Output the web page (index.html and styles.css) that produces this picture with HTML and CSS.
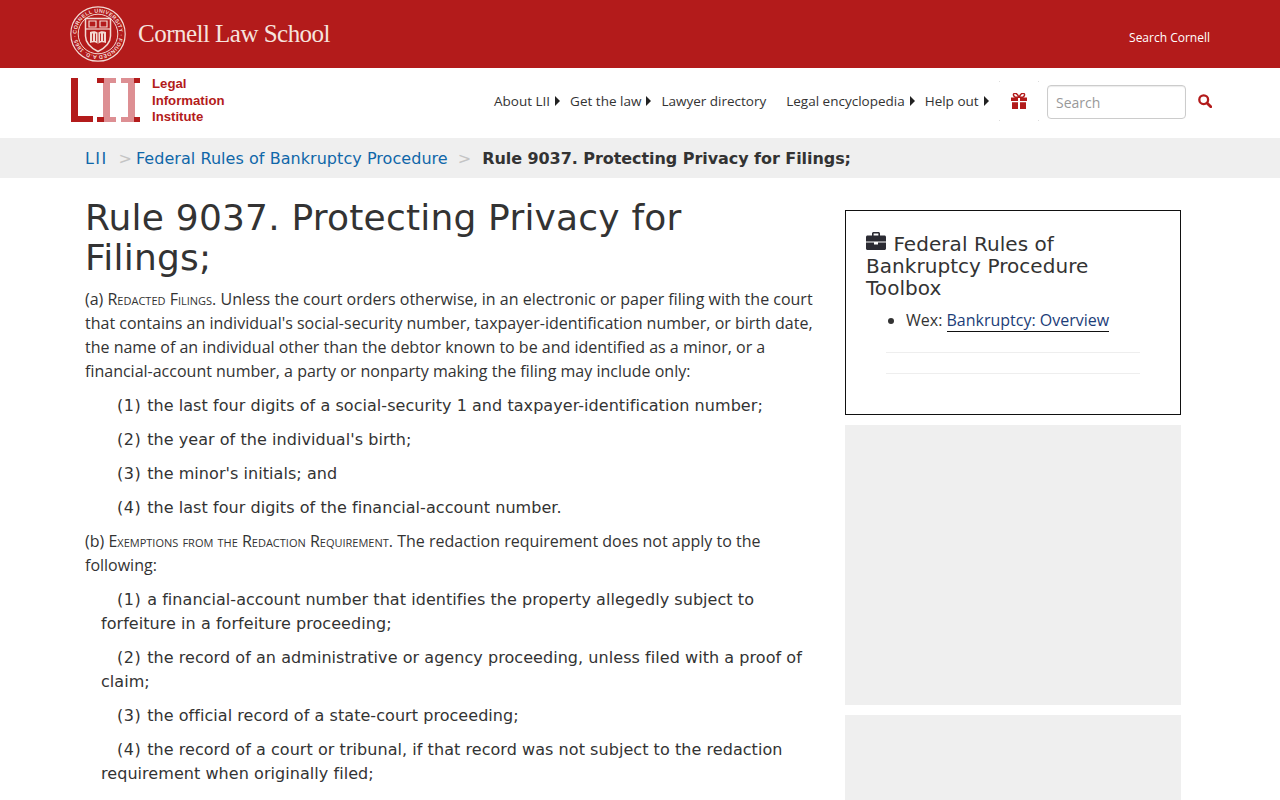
FILE: index.html
```html
<!DOCTYPE html>
<html lang="en">
<head>
<meta charset="utf-8">
<title>Rule 9037. Protecting Privacy for Filings</title>
<link rel="stylesheet" href="styles.css">
</head>
<body>
<header class="cornell">
  <a class="cornell-brand" href="#">
    <svg class="seal" viewBox="0 0 56 56" width="56" height="56" aria-hidden="true">
      <circle cx="28" cy="28" r="27.2" fill="none" stroke="#f3d9d3" stroke-width="1.2"/>
      <circle cx="28" cy="28" r="19.8" fill="none" stroke="#f3d9d3" stroke-width="1"/>
      <defs><path id="ring" d="M28 28 m-21.4 0 a21.4 21.4 0 1 1 42.8 0 a21.4 21.4 0 1 1 -42.8 0"/></defs>
      <text class="seal-text"><textPath href="#ring" textLength="132">CORNELL UNIVERSITY · FOUNDED A.D. 1865 ·</textPath></text>
      <path d="M15.5 12.5 H40.5 V30 C40.5 38 33 43 28 45.5 C23 43 15.5 38 15.5 30 Z" fill="none" stroke="#f3d9d3" stroke-width="1.5"/>
      <path d="M15.5 23 H40.5" stroke="#f3d9d3" stroke-width="1.2"/>
      <path d="M19 15 h7 v6 h-7 z M30 15 h7 v6 h-7 z" fill="none" stroke="#f3d9d3" stroke-width="1.2"/>
      <path d="M20 26 C23 25 26 25 28 27 C30 25 33 25 36 26 V37 C33 36 30 36 28 38 C26 36 23 36 20 37 Z" fill="#f3d9d3"/>
      <path d="M22.5 27.5 V35 M25.5 27.5 V35 M30.5 27.5 V35 M33.5 27.5 V35 M28 27 V38" stroke="#b31b1b" stroke-width=".9"/>
    </svg>
    <span class="cornell-name">Cornell Law School</span>
  </a>
  <a class="search-cornell" href="#">Search Cornell</a>
</header>

<nav class="lii-bar">
  <a class="lii-logo" href="#">
    <svg viewBox="0 0 70 44" width="70" height="44" aria-hidden="true">
      <path d="M0 0 H7 V38 H22 V44 H0 Z" fill="#b31b1b"/>
      <rect x="26" y="0" width="19" height="5" fill="#dd8f93"/>
      <rect x="26" y="0" width="7" height="5" fill="#b31b1b"/>
      <rect x="32" y="5" width="7" height="34" fill="#dd8f93"/>
      <rect x="26" y="39" width="19" height="5" fill="#dd8f93"/>
      <rect x="26" y="39" width="7" height="5" fill="#b31b1b"/>
      <rect x="50" y="0" width="19" height="5" fill="#dd8f93"/>
      <rect x="63" y="0" width="6" height="5" fill="#b31b1b"/>
      <rect x="57" y="5" width="7" height="34" fill="#dd8f93"/>
      <rect x="50" y="39" width="19" height="5" fill="#dd8f93"/>
      <rect x="63" y="39" width="6" height="5" fill="#b31b1b"/>
    </svg>
    <span class="lii-words"><span>Legal</span><span>Information</span><span>Institute</span></span>
  </a>
  <ul class="lii-menu">
    <li class="has-arrow"><a href="#">About LII</a></li>
    <li class="has-arrow"><a href="#">Get the law</a></li>
    <li class="plain"><a href="#">Lawyer directory</a></li>
    <li class="has-arrow"><a href="#">Legal encyclopedia</a></li>
    <li class="has-arrow"><a href="#">Help out</a></li>
  </ul>
  <a class="gift" href="#" aria-label="Donate">
    <span class="dot dot-tl"></span><span class="dot dot-tr"></span><span class="dot dot-bl"></span><span class="dot dot-br"></span>
    <svg viewBox="0 0 16 16" width="16" height="16" aria-hidden="true">
      <path d="M0 4.5 H7 V8 H0 Z M9 4.5 H16 V8 H9 Z M1 9.3 H7 V16 H1 Z M9 9.3 H15 V16 H9 Z" fill="#b31b1b"/>
      <path d="M8 4.2 C6.5 1 4.6 0 3.4 .4 C1.9 1 2.2 3.4 4.2 4.2 Z M8 4.2 C9.5 1 11.4 0 12.6 .4 C14.1 1 13.8 3.4 11.8 4.2 Z" fill="none" stroke="#b31b1b" stroke-width="1.5"/>
    </svg>
  </a>
  <input class="search-box" type="text" placeholder="Search" aria-label="Search">
  <a class="search-go" href="#" aria-label="Search">
    <svg viewBox="0 0 14 14" width="14" height="14" aria-hidden="true">
      <circle cx="5.7" cy="5.7" r="4.4" fill="none" stroke="#b31b1b" stroke-width="2.3"/>
      <path d="M9 9 L12.8 12.8" stroke="#b31b1b" stroke-width="2.8" stroke-linecap="round"/>
    </svg>
  </a>
</nav>

<div class="crumbs">
  <a class="crumb-home" href="#">LII</a><span class="sep sep-first">&gt;</span><a class="crumb-link" href="#">Federal Rules of Bankruptcy Procedure</a><span class="sep sep-last">&gt;</span><strong>Rule 9037. Protecting Privacy for Filings;</strong>
</div>

<div class="page">
  <main class="rule">
    <h1>Rule 9037. Protecting Privacy for Filings;</h1>
    <p class="para">(a) <span class="caps">Redacted Filings.</span> Unless the court orders otherwise, in an electronic or paper filing with the court that contains an individual's social-security number, taxpayer-identification number, or birth date, the name of an individual other than the debtor known to be and identified as a minor, or a financial-account number, a party or nonparty making the filing may include only:</p>
    <p class="sub"><span class="num">(1) </span>the last four digits of a social-security 1 and taxpayer-identification number;</p>
    <p class="sub"><span class="num">(2) </span>the year of the individual's birth;</p>
    <p class="sub"><span class="num">(3) </span>the minor's initials; and</p>
    <p class="sub"><span class="num">(4) </span>the last four digits of the financial-account number.</p>
    <p class="para">(b) <span class="caps">Exemptions from the Redaction Requirement.</span> The redaction requirement does not apply to the following:</p>
    <p class="sub"><span class="num">(1) </span>a financial-account number that identifies the property allegedly subject to forfeiture in a forfeiture proceeding;</p>
    <p class="sub"><span class="num">(2) </span>the record of an administrative or agency proceeding, unless filed with a proof of claim;</p>
    <p class="sub"><span class="num">(3) </span>the official record of a state-court proceeding;</p>
    <p class="sub"><span class="num">(4) </span>the record of a court or tribunal, if that record was not subject to the redaction requirement when originally filed;</p>
  </main>
  <aside class="side">
    <section class="toolbox">
      <h2><svg class="briefcase" viewBox="0 0 20 18" width="20" height="18" aria-hidden="true"><path d="M6 3.5 V1.6 C6 .7 6.7 0 7.6 0 H12.4 C13.3 0 14 .7 14 1.6 V3.5 H18.5 C19.3 3.5 20 4.2 20 5 V9.4 H0 V5 C0 4.2 .7 3.5 1.5 3.5 Z M7.6 1.5 V3.5 H12.4 V1.5 Z M0 10.6 H8 V12.6 H12 V10.6 H20 V16.5 C20 17.3 19.3 18 18.5 18 H1.5 C.7 18 0 17.3 0 16.5 Z" fill="#2b2b33" fill-rule="evenodd"/></svg> Federal Rules of Bankruptcy Procedure Toolbox</h2>
      <ul class="tools"><li>Wex: <a href="#">Bankruptcy: Overview</a></li></ul>
      <hr class="rule-line"><hr class="rule-line">
    </section>
    <div class="ad ad-one"></div>
    <div class="ad ad-two"></div>
  </aside>
</div>
</body>
</html>
```
FILE: styles.css
```css
* { box-sizing: border-box; }
html, body { margin: 0; height: 800px; overflow: hidden; }
body { font-family: "Open Sans", sans-serif; font-size: 16px; line-height: 24px; color: #333; background: #fff; }
a { text-decoration: none; color: inherit; }

.cornell { height: 68px; background: #b31b1b; display: flex; justify-content: space-between; padding: 6px 70px 0; }
.cornell-brand { display: flex; align-items: flex-start; gap: 12px; }
.seal { display: block; }
.seal-text { font: bold 5.4px "Liberation Sans", sans-serif; fill: #f3d9d3; }
.cornell-name { font-family: "Liberation Serif", serif; font-size: 25px; line-height: 56px; color: #f6e3de; letter-spacing: -.52px; }
.search-cornell { font-size: 12px; line-height: 20px; color: #fff; margin-top: 22px; }

.lii-bar { height: 70px; display: flex; align-items: flex-start; padding: 10px 68px 0 71px; }
.lii-logo { display: flex; flex: none; gap: 11px; width: 423px; }
.lii-logo svg { display: block; }
.lii-words { display: flex; flex-direction: column; font: bold 13.2px/16.5px "Liberation Sans", sans-serif; color: #b31b1b; margin-top: -2px; }
.lii-menu { list-style: none; margin: 11px 0 0; padding: 0; display: flex; font-size: 13.5px; line-height: 24px; color: #333; }
.lii-menu li { white-space: nowrap; }
.has-arrow { padding-right: 20px; position: relative; }
.has-arrow::after { content: ""; position: absolute; right: 10px; top: 7px; border-left: 5px solid #222; border-top: 5px solid transparent; border-bottom: 5px solid transparent; }
.plain { padding-right: 20px; }

.gift { position: relative; flex: none; width: 40px; height: 40px; margin: 3px 8px 0 auto; display: flex; align-items: center; justify-content: center; }
.gift svg { display: block; }
.dot { position: absolute; width: 1px; height: 1px; background: #ddd; }
.dot-tl { left: 0; top: 0; } .dot-tr { right: 0; top: 0; } .dot-bl { left: 0; bottom: 0; } .dot-br { right: 0; bottom: 0; }
.search-box { flex: none; width: 139px; height: 34px; margin-top: 7px; border: 1px solid #ccc; border-radius: 4px; padding: 0 8px; font: 14px "Open Sans", sans-serif; color: #555; box-shadow: inset 0 1px 1px rgba(0,0,0,.08); }
.search-box::placeholder { color: #999; opacity: 1; }
.search-go { margin: 16px 0 0 12px; }
.search-go svg { display: block; }

.crumbs { height: 40px; background: #efefef; padding: 1px 0 0 85px; font-family: "DejaVu Sans", sans-serif; font-size: 16px; line-height: 39px; display: flex; white-space: nowrap; }
.crumbs a { color: #0f67a9; }
.crumb-home { letter-spacing: 1.4px; }
.crumb-link { letter-spacing: .05px; }
.crumbs .sep { color: #c4c4c4; }
.crumbs .sep-first { margin: 0 4px 0 11px; }
.crumbs .sep-last { margin: 0 11px 0 10px; }
.crumbs strong { color: #333; letter-spacing: -.06px; }

.page { display: flex; padding: 20px 0 0 85px; gap: 30px; align-items: flex-start; }
.rule { width: 730px; }
h1 { font-family: "DejaVu Sans", sans-serif; font-weight: 400; font-size: 36px; line-height: 40px; letter-spacing: .2px; color: #333; margin: 0 0 9px; max-width: 700px; }
.para { margin: 0 0 10px; }
.caps { font-variant: small-caps; }
.sub { font-family: "DejaVu Sans", sans-serif; font-size: 16px; line-height: 24px; letter-spacing: .055px; margin: 0 0 9px 16px; padding-top: 1px; text-indent: 16px; }
.num { letter-spacing: .6px; }

.side { width: 336px; padding-top: 12px; }
.toolbox { height: 205px; border: 1px solid #111; padding: 22px 20px 20px; margin-bottom: 10px; }
h2 { font-family: "DejaVu Sans", sans-serif; font-weight: 400; font-size: 20px; line-height: 22px; letter-spacing: .05px; color: #333; margin: 0; }
.briefcase { vertical-align: -1px; margin-right: 1px; transform: translateY(-2px); }
.tools { margin: 9px 0 0; padding-left: 40px; }
.tools a { color: #1c3d78; border-bottom: 1px solid #111; }
.rule-line { border: 0; border-top: 1px solid #eee; margin: 20px 20px 0; }
.ad { background: #efefef; width: 336px; }
.ad-one { height: 280px; margin-bottom: 10px; }
.ad-two { height: 280px; }
```
